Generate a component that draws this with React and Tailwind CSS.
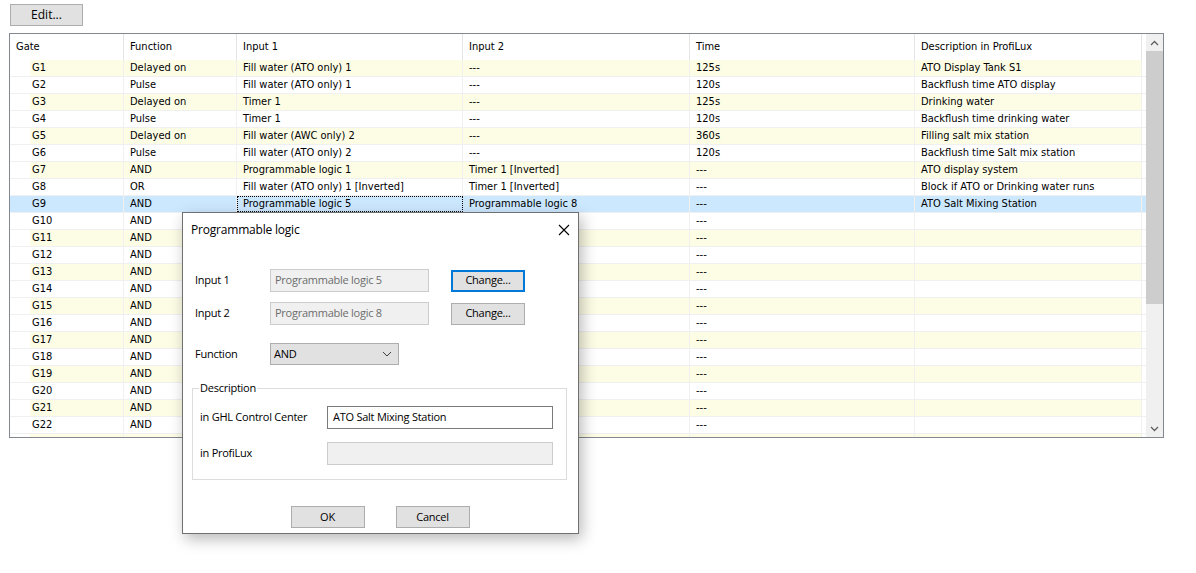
import React from "react";

const TF = { fontFamily: '"DejaVu Sans Condensed", "DejaVu Sans", sans-serif', fontStretch: "condensed" };
const SF = { fontFamily: '"Open Sans", "Noto Sans", sans-serif' };

const named = [
  ["G1", "Delayed on", "Fill water (ATO only) 1", "---", "125s", "ATO Display Tank S1"],
  ["G2", "Pulse", "Fill water (ATO only) 1", "---", "120s", "Backflush time ATO display"],
  ["G3", "Delayed on", "Timer 1", "---", "125s", "Drinking water"],
  ["G4", "Pulse", "Timer 1", "---", "120s", "Backflush time drinking water"],
  ["G5", "Delayed on", "Fill water (AWC only) 2", "---", "360s", "Filling salt mix station"],
  ["G6", "Pulse", "Fill water (ATO only) 2", "---", "120s", "Backflush time Salt mix station"],
  ["G7", "AND", "Programmable logic 1", "Timer 1 [Inverted]", "---", "ATO display system"],
  ["G8", "OR", "Fill water (ATO only) 1 [Inverted]", "Timer 1 [Inverted]", "---", "Block if ATO or Drinking water runs"],
  ["G9", "AND", "Programmable logic 5", "Programmable logic 8", "---", "ATO Salt Mixing Station"],
];
const rows = [...named];
for (let i = 10; i <= 22; i++) rows.push(["G" + i, "AND", "---", "---", "---", ""]);
rows.push(["", "", "", "", "", ""]);

const widths = [114, 113, 226, 227, 225, 227];
const headers = ["Gate", "Function", "Input 1", "Input 2", "Time", "Description in ProfiLux"];

function Row({ r, idx }) {
  const yellow = idx % 2 === 0;
  const selected = idx === 8;
  const bg = selected ? "bg-[#cce8ff]" : yellow ? "bg-[#fdfde6]" : "bg-white";
  return (
    <div className={`flex h-[17px] w-[1136px] shrink-0 border-b border-[#f0f0f0] ${selected ? "bg-[#cce8ff]" : ""}`}>
      {r.map((c, ci) => {
        if (ci === 0) {
          return (
            <div key={ci} className="flex h-full border-r border-[#f0f0f0]" style={{ width: widths[0] }}>
              <div className="w-[20px]" />
              <div className={`flex-1 flex items-center pl-[2px] ${bg}`}>{c}</div>
            </div>
          );
        }
        const focus = selected && ci === 2;
        return (
          <div
            key={ci}
            className={`flex items-center h-full whitespace-nowrap overflow-hidden ${bg} ${
              focus ? "border border-dotted border-black pl-[5px]" : "border-r border-[#f0f0f0] pl-[6px]"
            }`}
            style={{ width: widths[ci] }}
          >
            {c}
          </div>
        );
      })}
    </div>
  );
}

function Btn({ children, focus }) {
  return (
    <button
      className={`w-[74px] h-[22px] bg-[#e1e1e1] flex items-center justify-center ${
        focus ? "border-2 border-[#0078d7]" : "border border-[#adadad]"
      }`}
    >
      {children}
    </button>
  );
}

export default function App() {
  return (
    <div className="relative w-[1196px] h-[573px] bg-white overflow-hidden text-black">
      <div className="pt-[4px] pl-[10px]">
        <button
          className="w-[73px] h-[22px] bg-[#e1e1e1] border border-[#adadad] text-[12px] leading-none flex items-center justify-center"
          style={SF}
        >
          Edit...
        </button>
      </div>

      <div className="ml-[9px] mt-[7px] w-[1155px] h-[405px] border border-[#828790] flex overflow-hidden text-[11px]" style={TF}>
        <div className="w-[1136px] flex flex-col overflow-hidden">
          <div className="flex h-[26px] shrink-0">
            {headers.map((h, i) => (
              <div key={i} className="flex items-center pl-[6px] border-r border-[#e5e5e5]" style={{ width: widths[i] }}>
                {h}
              </div>
            ))}
          </div>
          {rows.map((r, i) => (
            <Row key={i} r={r} idx={i} />
          ))}
        </div>
        <div className="w-[17px] ml-auto bg-[#f0f0f0] flex flex-col">
          <div className="h-[17px] flex items-center justify-center">
            <svg width="9" height="6" viewBox="0 0 9 6">
              <path d="M1 5 L4.5 1.5 L8 5" stroke="#606060" strokeWidth="1.3" fill="none" />
            </svg>
          </div>
          <div className="h-[253px] bg-[#cdcdcd]" />
          <div className="flex-1" />
          <div className="h-[17px] flex items-center justify-center">
            <svg width="9" height="6" viewBox="0 0 9 6">
              <path d="M1 1 L4.5 4.5 L8 1" stroke="#606060" strokeWidth="1.3" fill="none" />
            </svg>
          </div>
        </div>
      </div>

      {/* Dialog */}
      <div
        className="absolute left-[182px] top-[212px] w-[397px] h-[322px] bg-white border border-[#707070] shadow-[3px_5px_14px_rgba(0,0,0,0.28)] flex flex-col text-[11px] tracking-[-0.25px]"
        style={SF}
      >
        <div className="h-[31px] shrink-0 flex items-center justify-between pl-[8px] pr-[8px] pt-[2px]">
          <span className="text-[12px] tracking-[-0.2px]">Programmable logic</span>
          <svg width="12" height="12" viewBox="0 0 12 12">
            <path d="M1 1 L11 11 M11 1 L1 11" stroke="#000" strokeWidth="1.1" />
          </svg>
        </div>
        <div className="pl-[9px] pt-[25px] flex flex-col">
          <div className="flex items-center h-[23px] pl-[3px]">
            <span className="w-[75px]">Input 1</span>
            <div className="w-[159px] h-[23px] bg-[#f0f0f0] border border-[#cccccc] text-[#6d6d6d] flex items-center pl-[4px]">
              Programmable logic 5
            </div>
            <div className="ml-[22px]">
              <Btn focus>Change...</Btn>
            </div>
          </div>
          <div className="flex items-center h-[23px] pl-[3px] mt-[10px]">
            <span className="w-[75px]">Input 2</span>
            <div className="w-[159px] h-[23px] bg-[#f0f0f0] border border-[#cccccc] text-[#6d6d6d] flex items-center pl-[4px]">
              Programmable logic 8
            </div>
            <div className="ml-[22px]">
              <Btn>Change...</Btn>
            </div>
          </div>
          <div className="flex items-center h-[22px] pl-[3px] mt-[18px]">
            <span className="w-[75px]">Function</span>
            <div className="w-[129px] h-[22px] bg-[#e1e1e1] border border-[#adadad] flex items-center justify-between pl-[3px] pr-[6px]">
              <span>AND</span>
              <svg width="10" height="6" viewBox="0 0 10 6">
                <path d="M1 1 L5 5 L9 1" stroke="#404040" strokeWidth="1" fill="none" />
              </svg>
            </div>
          </div>
          <div className="relative mt-[23px] w-[375px] h-[92px] border border-[#dcdcdc] pl-[7px] pt-[17px]">
            <span className="absolute left-[6px] -top-[9px] bg-white px-[1px] leading-[16px]">Description</span>
            <div className="flex items-center h-[23px]">
              <span className="w-[127px]">in GHL Control Center</span>
              <div className="w-[226px] h-[23px] bg-white border border-[#7a7a7a] flex items-center pl-[5px]">
                ATO Salt Mixing Station
              </div>
            </div>
            <div className="flex items-center h-[23px] mt-[13px]">
              <span className="w-[127px]">in ProfiLux</span>
              <div className="w-[226px] h-[23px] bg-[#f0f0f0] border border-[#cccccc]" />
            </div>
          </div>
          <div className="flex justify-center gap-[31px] mt-[26px] pr-[10px]">
            <Btn>OK</Btn>
            <Btn>Cancel</Btn>
          </div>
        </div>
      </div>
    </div>
  );
}
